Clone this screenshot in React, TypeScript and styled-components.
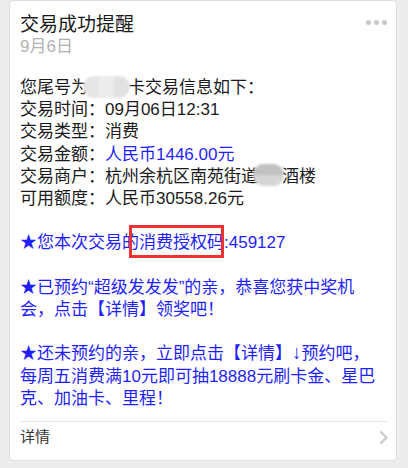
import styled, { createGlobalStyle } from 'styled-components';

const GlobalStyle = createGlobalStyle`
  html, body {
    margin: 0;
    padding: 0;
    background: #ededed;
  }
  body {
    font-family: 'Liberation Sans', 'Noto Sans CJK SC', sans-serif;
  }
`;

const Page = styled.div`
  width: 408px;
  height: 468px;
  padding: 0 11px 0 9px;
  box-sizing: border-box;
  overflow: hidden;
`;

const Card = styled.div`
  background: #fff;
  border: 1px solid #dedede;
  border-radius: 4px;
  padding: 12px 8px 12px 10px;
`;

const Header = styled.div`
  display: flex;
  justify-content: space-between;
  align-items: flex-start;
`;

const Title = styled.div`
  font-size: 19px;
  line-height: 24px;
  color: #1a1a1a;
`;

const Dots = styled.div`
  display: flex;
  gap: 3px;
  margin-top: 7px;
  margin-right: 1px;

  span {
    width: 5px;
    height: 5px;
    border-radius: 50%;
    background: #c8c8c8;
  }
`;

const DateText = styled.div`
  font-size: 17px;
  line-height: 20px;
  color: #b2b2b2;
`;

const Body = styled.div`
  margin-top: 20px;
  font-size: 17px;
  line-height: 22.2px;
  color: #1a1a1a;
  white-space: nowrap;
`;

const Para = styled.p<{ $blue?: boolean; $spaced?: boolean }>`
  margin: ${({ $spaced }) => ($spaced ? '22.2px 0 0' : '0')};
  color: ${({ $blue }) => ($blue ? '#1f1ffa' : 'inherit')};
`;

const Blue = styled.span`
  color: #1f1ffa;
`;

const Arrow = styled.span`
  font-size: 19px;
  line-height: 0;
`;

const Mosaic = styled.span<{ $w: number; $tone: 'light' | 'dark' }>`
  display: inline-block;
  vertical-align: middle;
  position: relative;
  width: ${({ $w }) => $w}px;
  height: 22px;
  margin-left: -5px;
  margin-right: -2px;
  margin-top: -4px;
  border-radius: 11px;
  filter: blur(1px);
  background: ${({ $tone }) =>
    $tone === 'light'
      ? 'linear-gradient(90deg, #e6e6e6 0 33%, #ececec 33% 66%, #e2e2e2 66% 100%)'
      : 'linear-gradient(180deg, #c2c2c2 0 50%, #d6d6d6 50% 100%)'};
`;

const Marked = styled.span`
  position: relative;

  &::after {
    content: '';
    position: absolute;
    left: -10px;
    right: 0;
    top: -8px;
    bottom: -6px;
    border: 3px solid #ee3131;
  }
`;

const Footer = styled.div`
  margin-top: 11px;
  border-top: 1px solid #e8e8e8;
  padding-top: 4px;
  display: flex;
  justify-content: space-between;
  align-items: center;
  font-size: 15px;
  line-height: 22px;
  color: #353535;
`;

const Chevron = () => (
  <svg width="9" height="15" viewBox="0 0 9 15" style={{ marginRight: 0 }}>
    <path d="M1.5 1.5 L7.5 7.5 L1.5 13.5" fill="none" stroke="#c7c7c7" strokeWidth="2" />
  </svg>
);

export default function App() {
  return (
    <>
      <GlobalStyle />
      <Page>
        <Card>
          <Header>
            <Title>交易成功提醒</Title>
            <Dots>
              <span />
              <span />
              <span />
            </Dots>
          </Header>
          <DateText>9月6日</DateText>
          <Body>
            <Para>
              您尾号为<Mosaic $w={47} $tone="light" />卡交易信息如下：
              <br />
              交易时间：09月06日12:31
              <br />
              交易类型：消费
              <br />
              交易金额：<Blue>人民币1446.00元</Blue>
              <br />
              交易商户：杭州余杭区南苑街道<Mosaic $w={31} $tone="dark" />酒楼
              <br />
              可用额度：人民币30558.26元
            </Para>
            <Para $blue $spaced>
              ★您本次交易的<Marked>消费授权码</Marked>:459127
            </Para>
            <Para $blue $spaced>
              ★已预约“超级发发发”的亲，恭喜您获中奖机
              <br />
              会，点击【详情】领奖吧！
            </Para>
            <Para $blue $spaced>
              ★还未预约的亲，立即点击【详情】<Arrow>↓</Arrow>预约吧，
              <br />
              每周五消费满10元即可抽18888元刷卡金、星巴
              <br />
              克、加油卡、里程！
            </Para>
          </Body>
          <Footer>
            详情
            <Chevron />
          </Footer>
        </Card>
      </Page>
    </>
  );
}
